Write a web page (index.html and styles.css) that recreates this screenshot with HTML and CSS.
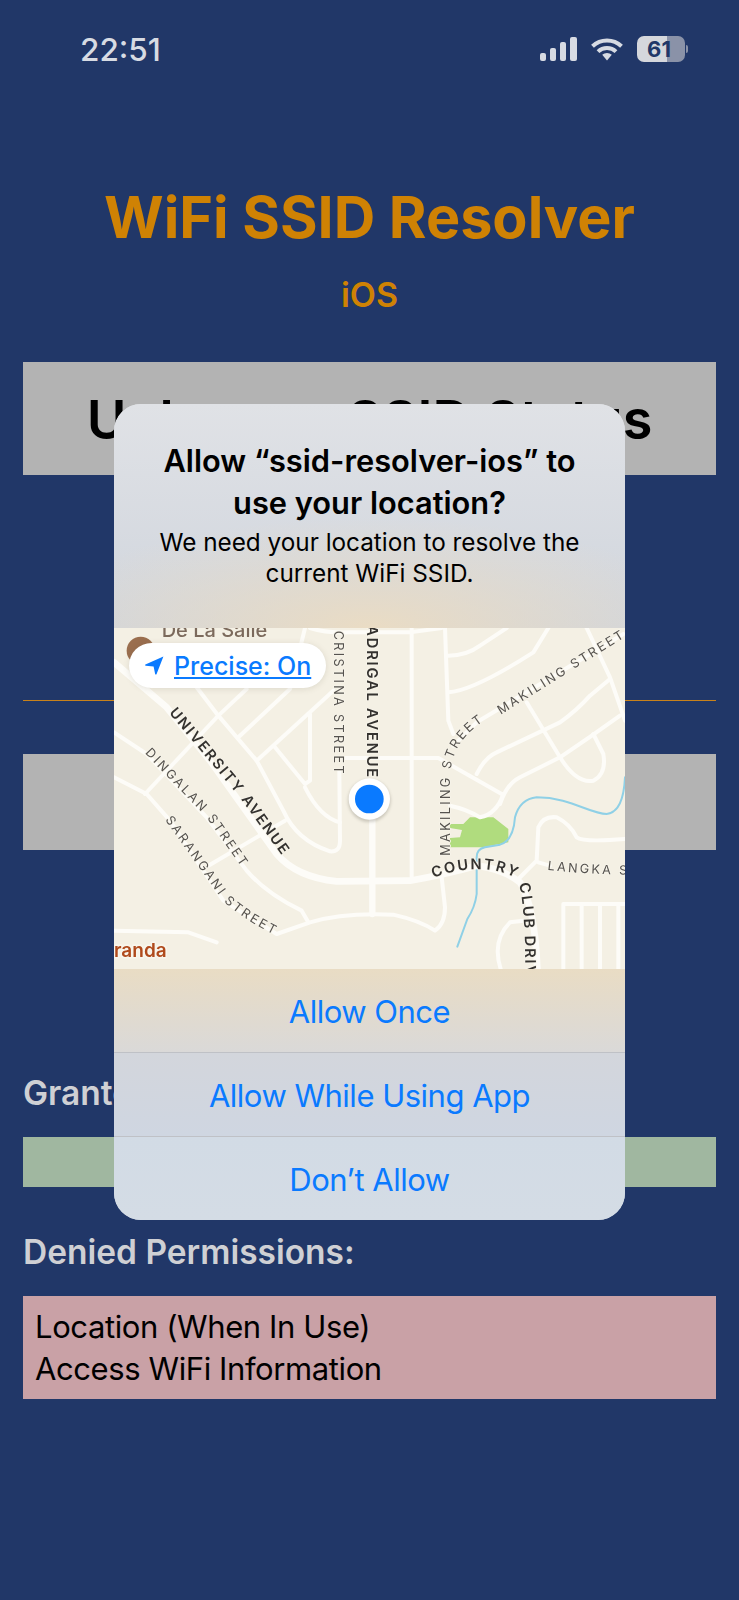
FILE: index.html

```html
<!DOCTYPE html>
<html lang="en">
<head>
  <meta charset="UTF-8" />
  <meta name="viewport" content="width=device-width, initial-scale=1.0"/>
  <title>WiFi SSID Resolver</title>
  <link rel="stylesheet" href="styles.css">
</head>
<body>
  <div class="page">
    <div class="status-bar">
      <div class="time">22:51</div>
      <div class="status-icons">
        <div class="signal">
          <span class="bar bar-1"></span>
          <span class="bar bar-2"></span>
          <span class="bar bar-3"></span>
          <span class="bar bar-4"></span>
        </div>
        <svg class="wifi" width="32" height="23" viewBox="0 0 32 23">
          <path d="M1.5 8.2 A21 21 0 0 1 30.5 8.2" />
          <path d="M7 13.6 A13.2 13.2 0 0 1 25 13.6" />
          <path class="wifi-tip" d="M11.2 16.8 A7.2 7.2 0 0 1 20.8 16.8 L16 22.6 Z" />
        </svg>
        <div class="battery">
          <div class="battery-body"><span>61</span></div>
          <div class="battery-nub"></div>
        </div>
      </div>
    </div>

    <h1 class="app-title">WiFi SSID Resolver</h1>
    <div class="platform">iOS</div>

    <div class="status-box">Unknown SSID Status</div>
    <div class="rule"></div>
    <div class="action-box"></div>

    <div class="section-title granted-title">Granted Permissions:</div>
    <div class="granted-box"></div>

    <div class="section-title denied-title">Denied Permissions:</div>
    <div class="denied-box">
      <div>Location (When In Use)</div>
      <div>Access WiFi Information</div>
    </div>

    <div class="alert">
      <div class="alert-head">
        <div class="alert-title">Allow “ssid-resolver-ios” to<br>use your location?</div>
        <div class="alert-message">We need your location to resolve the<br>current WiFi SSID.</div>
      </div>

      <div class="map">
        <!-- map is drawn in 3x units so coordinates are easy to read off -->
        <svg class="map-svg" width="511" height="341" viewBox="12 22 1533 1023">
          <defs>
            <path id="p-university" d="M176,276 L385,525 L560,765" />
            <path id="p-dingalan" d="M104,397 L290,590 L430,790" />
            <path id="p-sarangani" d="M165,597 L340,842 Q410,905 520,955" />
            <path id="p-cristina" d="M672,30 L672,480" />
            <path id="p-madrigal" d="M771,-90 L771,475" />
            <path id="p-makiling-a" d="M1021,705 L1021,470 Q1021,370 1115,305" />
            <path id="p-makiling-b" d="M1172,282 L1560,40" />
            <path id="p-country" d="M970,772 C1060,738 1150,735 1218,772 C1240,810 1246,900 1246,1120" />
            <path id="p-langka" d="M1312,747 Q1420,762 1600,762" />
          </defs>

          <rect class="land" x="12" y="22" width="1533" height="1023" />

          <polygon class="park" points="1020,610 1060,610 1080,590 1150,590 1195,625 1195,665 1120,680 1020,680 1020,652 1050,650 1056,628 1020,622" />
          <path class="river" d="M1545,470 Q1540,575 1490,580 C1440,580 1380,530 1280,530 Q1230,535 1215,590 Q1210,660 1170,672 L1125,680 Q1100,685 1100,710 L1100,820 Q1095,860 1072,895 L1042,978" />

          <g class="roads">
            <path d="M260,200 L325,285 L440,420 L520,570 Q560,660 660,692 Q690,695 690,660 L688,450" />
            <path d="M105,520 L325,285 L410,205" />
            <path d="M385,350 L540,205 L585,22" />
            <path d="M440,420 L670,210" />
            <path d="M495,380 L585,490 L600,480 L600,280" />
            <path d="M585,500 Q630,590 690,605" />
            <path d="M705,412 L985,412 L1175,520" />
            <path d="M905,22 L905,775" />
            <path d="M600,22 Q650,38 720,35 L900,35 L995,22" />
            <path d="M1005,22 L1015,300 L1030,340" />
            <path d="M1015,105 Q1070,105 1110,75 L1190,22" />
            <path d="M1015,215 Q1090,210 1270,95 L1315,22" />
            <path d="M1030,375 L1100,305 L1540,40" />
            <path d="M1100,460 Q1125,410 1160,395 L1350,305 Q1400,270 1440,225 L1500,175" />
            <path d="M1250,245 L1350,410 Q1400,490 1450,480 Q1490,460 1480,400 L1450,340" />
            <path d="M1170,550 Q1190,490 1230,470 L1350,410 Q1440,350 1530,285" />
            <path d="M1430,22 L1500,170 L1545,300" />
            <path d="M12,335 L110,400 L290,590 L410,750 Q470,820 575,870 L595,905" />
            <path d="M12,470 L110,520 L180,600 L340,840 L500,940 L600,905 Q700,875 850,882 Q930,900 975,930 Q1005,910 1005,860 L995,770" />
            <path d="M295,735 L525,600" />
            <path d="M12,930 L235,935 L320,965" />
            <path d="M1172,1045 Q1145,960 1200,905 L1240,900" />
            <path d="M1360,1045 L1360,850 L1545,850" />
            <path d="M1415,850 L1415,1045 M1470,850 L1470,1045 M1525,850 L1525,1045" />
            <path d="M1225,775 L1280,720 L1285,620 Q1300,585 1340,590 Q1380,610 1400,650 Q1420,665 1545,655" />
            <path d="M1285,725 L1320,735" />
            <path d="M1020,555 Q1070,565 1110,590 Q1160,580 1180,520" />
            <path class="road-mid" d="M787,590 L787,880" />
            <path class="road-major" d="M12,125 L170,260 L300,420 L500,700 Q560,770 680,782 L900,780 Q1010,760 1100,735 Q1180,745 1230,785 Q1275,860 1282,1045" />
          </g>

          <circle class="poi" cx="92" cy="90" r="42" />
          <text class="label-poi" x="155" y="50">De La Salle</text>
          <text class="label-place" x="170" y="1008" text-anchor="end">Miranda</text>

          <text class="label-major"><textPath href="#p-university">UNIVERSITY AVENUE</textPath></text>
          <text class="label-minor"><textPath href="#p-dingalan">DINGALAN STREET</textPath></text>
          <text class="label-minor"><textPath href="#p-sarangani">SARANGANI STREET</textPath></text>
          <text class="label-minor"><textPath href="#p-cristina">CRISTINA STREET</textPath></text>
          <text class="label-major" text-anchor="end"><textPath href="#p-madrigal" startOffset="100%">MADRIGAL AVENUE</textPath></text>
          <text class="label-minor"><textPath href="#p-makiling-a">MAKILING STREET</textPath></text>
          <text class="label-minor"><textPath href="#p-makiling-b">MAKILING STREET</textPath></text>
          <text class="label-major"><textPath href="#p-country">COUNTRY CLUB DRIVE</textPath></text>
          <text class="label-minor"><textPath href="#p-langka">LANGKA STREET</textPath></text>

          <circle class="dot-shadow" cx="778" cy="540" r="64" />
          <circle class="dot-ring" cx="778" cy="535" r="62" />
          <circle class="dot" cx="778" cy="535" r="43" />
        </svg>

        <div class="precise-pill">
          <svg class="precise-arrow" width="19" height="19" viewBox="0 0 19 19">
            <path d="M18.4 0.6 L0.4 8.4 Q-0.4 9.2 0.8 9.7 L8.6 10.6 L10.2 18.2 Q10.9 19 11.5 18.2 Z" />
          </svg>
          <span class="precise-text">Precise: On</span>
        </div>
      </div>

      <div class="alert-button button-first">Allow Once</div>
      <div class="alert-button button-second">Allow While Using App</div>
      <div class="alert-button button-third">Don’t Allow</div>
    </div>
  </div>
</body>
</html>
```

FILE: styles.css

```css
* {
  margin: 0;
  padding: 0;
  box-sizing: border-box;
}

html, body {
  width: 100%;
  height: 100%;
  overflow: hidden;
  font-family: Inter, 'Noto Sans', sans-serif;
  background-color: #213768;
}

.page {
  position: relative;
  width: 739px;
  height: 1600px;
  background-color: #213768;
  padding: 0 23px;
}

/* status bar */
.status-bar {
  display: flex;
  justify-content: space-between;
  align-items: center;
  height: 98px;
  margin: 0 -23px;
  padding: 0 51px 0 80px;
  color: #d7dbe3;
}

.time {
  font-size: 31.5px;
  font-weight: 500;
}

.status-icons {
  display: flex;
  align-items: center;
}

.signal {
  display: flex;
  align-items: flex-end;
  gap: 4px;
  height: 24px;
  margin-right: 14px;
}

.bar {
  display: block;
  width: 6px;
  background-color: #d7dbe3;
  border-radius: 2px;
}

.bar-1 { height: 8px; }
.bar-2 { height: 13px; }
.bar-3 { height: 19px; }
.bar-4 { height: 24px; width: 7px; }

.wifi {
  margin-right: 14px;
}

.wifi path {
  fill: none;
  stroke: #d7dbe3;
  stroke-width: 4px;
}

.wifi .wifi-tip {
  fill: #d7dbe3;
  stroke: none;
}

.battery {
  display: flex;
  align-items: center;
}

.battery-body {
  display: flex;
  align-items: center;
  justify-content: center;
  width: 48px;
  height: 26px;
  border-radius: 7px;
  background: linear-gradient(to right, #d5d7dc 62%, #8a92a8 62%);
  color: #213768;
  font-size: 22px;
  font-weight: 700;
  padding-right: 4px;
}

.battery-nub {
  width: 2px;
  height: 8px;
  margin-left: 1px;
  border-radius: 0 2px 2px 0;
  background-color: #8a92a8;
}

/* page content, dimmed by the alert */
.app-title {
  margin-top: 84px;
  height: 70px;
  line-height: 70px;
  text-align: center;
  font-size: 57.5px;
  font-weight: 700;
  color: #cf8204;
  white-space: nowrap;
}

.platform {
  margin-top: 23px;
  height: 40px;
  line-height: 40px;
  text-align: center;
  font-size: 34px;
  font-weight: 600;
  color: #cf8204;
}

.status-box {
  margin-top: 47px;
  height: 113px;
  line-height: 116px;
  text-align: center;
  font-size: 54px;
  font-weight: 600;
  color: #000;
  background-color: #b3b3b3;
  white-space: nowrap;
}

.rule {
  margin-top: 225px;
  height: 1px;
  background-color: #c9821a;
}

.action-box {
  margin-top: 53px;
  height: 96px;
  background-color: #b3b3b3;
}

.section-title {
  height: 40px;
  line-height: 40px;
  font-size: 33.5px;
  font-weight: 600;
  color: #cfd0d4;
  white-space: nowrap;
}

.granted-title {
  margin-top: 223px;
}

.granted-box {
  margin-top: 24px;
  height: 50px;
  background-color: #a0b7a0;
}

.denied-title {
  margin-top: 45px;
}

.denied-box {
  margin-top: 24px;
  height: 103px;
  padding: 10px 12px;
  font-size: 31px;
  letter-spacing: -0.4px;
  line-height: 42px;
  color: #000;
  background-color: #c9a1a6;
}

/* location alert */
.alert {
  position: absolute;
  top: 404px;
  left: 114px;
  width: 511px;
  height: 816px;
  border-radius: 27px;
  overflow: hidden;
  background: linear-gradient(to bottom, #e0e2e6 0%, #d3d9e2 100%);
}

.alert-head {
  height: 224px;
  padding-top: 36px;
  text-align: center;
  color: #000;
  background:
    radial-gradient(ellipse 340px 110px at 50% 100%, #eadcc4 0%, rgba(232, 220, 198, 0) 100%),
    linear-gradient(to bottom, #e0e2e6 0%, #d0d5dd 100%);
}

.alert-title {
  font-size: 30.8px;
  line-height: 42px;
  font-weight: 600;
}

.alert-message {
  margin-top: 3px;
  font-size: 24.3px;
  line-height: 31px;
}

.map {
  position: relative;
  height: 341px;
  border-bottom: 1px solid #d9d4c2;
}

.map-svg {
  display: block;
  filter: blur(0.35px);
}

.land { fill: #f4f0e4; }
.park { fill: #b0dc7e; }

.river {
  fill: none;
  stroke: #8fd0e6;
  stroke-width: 6;
  stroke-linecap: round;
  stroke-linejoin: round;
}

.roads path {
  fill: none;
  stroke: #fdfcf8;
  stroke-width: 12;
  stroke-linecap: round;
  stroke-linejoin: round;
}

.roads .road-mid { stroke-width: 19; }
.roads .road-major { stroke-width: 20; }

.poi { fill: #9a6e4e; }

.label-poi,
.label-place,
.label-major,
.label-minor {
  font-family: Inter, 'Noto Sans', sans-serif;
  paint-order: stroke;
  stroke-linejoin: round;
}

.label-poi {
  font-size: 60px;
  font-weight: 500;
  fill: #7c6a5c;
  stroke: #f4f0e4;
  stroke-width: 7;
}

.label-place {
  font-size: 57px;
  font-weight: 600;
  fill: #b04a1c;
  stroke: #f8f5ec;
  stroke-width: 10;
}

.label-major {
  font-size: 44px;
  font-weight: 600;
  letter-spacing: 5.5px;
  fill: #34322f;
  stroke: #f7f4ea;
  stroke-width: 5;
}

.label-minor {
  font-size: 38px;
  font-weight: 400;
  letter-spacing: 7px;
  fill: #55524e;
  stroke: #f7f4ea;
  stroke-width: 5;
}

.dot-shadow {
  fill: rgba(60, 55, 40, 0.22);
  filter: blur(5px);
}

.dot-ring { fill: #fff; }
.dot { fill: #0a7aff; }

.precise-pill {
  position: absolute;
  top: 15px;
  left: 15px;
  display: flex;
  align-items: center;
  width: 197px;
  height: 45px;
  padding-left: 16px;
  border-radius: 23px;
  background-color: #fff;
  box-shadow: 0 1px 6px rgba(90, 80, 60, 0.15);
}

.precise-arrow {
  margin-right: 10px;
}

.precise-arrow path {
  fill: #0a7aff;
}

.precise-text {
  font-size: 25px;
  font-weight: 500;
  color: #0a7aff;
  text-decoration: underline;
  white-space: nowrap;
}

.alert-button {
  height: 84px;
  line-height: 85px;
  text-align: center;
  font-size: 31px;
  letter-spacing: -0.5px;
  color: #0a7aff;
  border-top: 1px solid #bfc1c6;
}

.button-first {
  border-top: none;
  height: 83px;
  background: linear-gradient(to bottom, #e9dcc4 0%, #dad9d8 100%);
}

.button-second {
  background: linear-gradient(to bottom, #d3d6dc 0%, #cfd6e1 100%);
}

.button-third {
  background: linear-gradient(to bottom, #d2dbe5 0%, #d4dce5 100%);
}
```
